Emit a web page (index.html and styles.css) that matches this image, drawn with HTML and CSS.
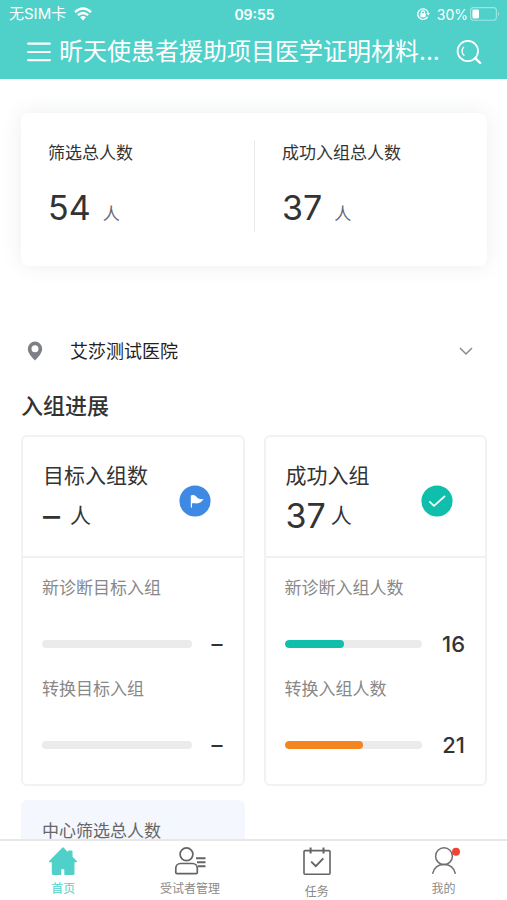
FILE: index.html
```html
<!DOCTYPE html>
<html lang="zh-CN">
<head>
<meta charset="utf-8">
<meta name="viewport" content="width=device-width, initial-scale=1">
<title>首页</title>
<link rel="stylesheet" href="styles.css">
</head>
<body>
<header class="top">
  <div class="status">
    <div class="status-side">
      <span class="carrier">无SIM卡</span>
      <svg width="18" height="14" viewBox="0 0 18 14" fill="none" stroke="#fff" stroke-width="2.4"><path d="M1 5.2Q9-2 17 5.2M3.9 8.2Q9 3.8 14.1 8.2"/><path d="M6 10.2Q9 7.8 12 10.2L9 13.4Z" fill="#fff" stroke="none"/></svg>
    </div>
    <strong class="clock">09:55</strong>
    <div class="status-side status-right">
      <svg width="14" height="14" viewBox="0 0 14 14" fill="none" stroke="#fff" stroke-width="1.3"><path d="M11.6 9.8A5.3 5.3 0 1 1 12.3 6.6"/><path d="M10.4 6.1h3.6l-1.8 2.5z" fill="#fff" stroke="none"/><rect x="4.3" y="6.2" width="5.4" height="4" rx=".6" fill="#fff" stroke="none"/><path d="M5.4 6.5V5.4a1.6 1.6 0 0 1 3.2 0v1.1"/></svg>
      <span class="percent">30%</span>
      <svg width="30" height="14" viewBox="0 0 30 14"><rect x=".6" y=".6" width="25.8" height="12.6" rx="3" fill="none" stroke="#fff" stroke-opacity=".45" stroke-width="1.1"/><rect x="2.4" y="2.4" width="6.6" height="9" rx="1.4" fill="#fff"/><path d="M28 4.6q2 2.3 0 4.6z" fill="#fff" fill-opacity=".5"/></svg>
    </div>
  </div>
  <div class="bar">
    <button class="icon-button" type="button" aria-label="菜单">
      <svg width="24" height="20" viewBox="0 0 24 20" stroke="#fff" stroke-width="2.2" stroke-linecap="round"><path d="M1.2 1.6h21.6M1.2 10h21.6M1.2 18.2h21.6"/></svg>
    </button>
    <h1 class="title">昕天使患者援助项目医学证明材料...</h1>
    <button class="icon-button" type="button" aria-label="搜索">
      <svg width="26" height="26" viewBox="0 0 26 26" fill="none" stroke="#fff" stroke-width="1.8" stroke-linecap="round"><circle cx="11.8" cy="12" r="10.2"/><path d="M7.6 8.2a5.6 5.6 0 0 0 .4 8.1" stroke-width="1.3"/><path d="M19.4 19.4l4.8 4.6" stroke-width="2.4"/></svg>
    </button>
  </div>
</header>

<main class="content">
  <section class="summary">
    <div class="stat">
      <div class="stat-label">筛选总人数</div>
      <div class="stat-value"><span class="number">54</span><span class="unit">人</span></div>
    </div>
    <div class="stat">
      <div class="stat-label">成功入组总人数</div>
      <div class="stat-value"><span class="number">37</span><span class="unit">人</span></div>
    </div>
  </section>

  <div class="hospital">
    <svg width="16" height="20" viewBox="0 0 16 20"><path fill="#7d8186" fill-rule="evenodd" d="M8 .6a7.2 7.2 0 0 0-7.2 7.2C.8 12.2 5 16.6 8 19.4c3-2.8 7.2-7.2 7.2-11.6A7.2 7.2 0 0 0 8 .6zm0 3.6a3.5 3.5 0 1 1 0 7 3.5 3.5 0 0 1 0-7z"/></svg>
    <select class="hospital-select" aria-label="医院"><option>艾莎测试医院</option></select>
    <svg width="14" height="10" viewBox="0 0 14 10" fill="none" stroke="#8a8a8a" stroke-width="1.5"><path d="M1 2l6 6 6-6"/></svg>
  </div>

  <h2 class="heading">入组进展</h2>

  <div class="cards">
    <section class="card">
      <div class="card-top">
        <div class="card-text">
          <div class="card-title">目标入组数</div>
          <div class="card-value"><span class="number">–</span><span class="person">人</span></div>
        </div>
        <svg class="badge" width="32" height="32" viewBox="0 0 32 32"><circle cx="16" cy="16" r="15.6" fill="#3d89e3"/><path d="M12.4 10.4V22.5" stroke="#fff" stroke-width="1.2"/><path d="M12.5 10.4c2.5-1 4.2.2 5.6 2.2 1.8 1.7 3.7 1.9 6.7 1.5-2 2.9-4.4 4.4-7 4.3-2-.1-3.2-.5-5.3.2z" fill="#fff"/></svg>
      </div>
      <div class="card-body">
        <div class="row-label">新诊断目标入组</div>
        <div class="row"><div class="track"></div><b class="count">–</b></div>
        <div class="row-label">转换目标入组</div>
        <div class="row"><div class="track"></div><b class="count">–</b></div>
      </div>
    </section>
    <section class="card">
      <div class="card-top">
        <div class="card-text">
          <div class="card-title">成功入组</div>
          <div class="card-value"><span class="number">37</span><span class="person">人</span></div>
        </div>
        <svg class="badge" width="32" height="32" viewBox="0 0 32 32"><circle cx="16" cy="16" r="15.6" fill="#0fbfab"/><path d="M8.3 16.3l4.7 4.5L24 11" fill="none" stroke="#fff" stroke-width="1.7"/></svg>
      </div>
      <div class="card-body">
        <div class="row-label">新诊断入组人数</div>
        <div class="row"><div class="track"><div class="fill teal" style="width:43%"></div></div><b class="count">16</b></div>
        <div class="row-label">转换入组人数</div>
        <div class="row"><div class="track"><div class="fill orange" style="width:57%"></div></div><b class="count">21</b></div>
      </div>
    </section>
    <section class="panel">中心筛选总人数</section>
  </div>
</main>

<nav class="tabs">
  <a class="tab active" href="#home">
    <svg width="30" height="28" viewBox="0 0 30 28"><path fill="#4fd1ca" stroke="#4fd1ca" stroke-width="1.4" stroke-linejoin="round" d="M15 1L1.7 14.5H4.5V26.5a.8.8 0 0 0 .8.8H12.5V21.5h4.500v5.800H25a.8.8 0 0 0 .8-.8V14.500h2.500L23.800 10V4.200h-3.300v2.500z"/></svg>
    <span>首页</span>
  </a>
  <a class="tab" href="#subjects">
    <svg width="32" height="28" viewBox="0 0 32 28" fill="none" stroke="#646464" stroke-width="1.7"><circle cx="12.5" cy="7.3" r="6.4"/><path d="M6.5 16.5h12a4.800 4.800 0 0 1 4.800 4.800v4.200a1.200 1.200 0 0 1-1.200 1.200H3a1.200 1.200 0 0 1-1.200-1.200v-4.200a4.800 4.800 0 0 1 4.700-4.800z"/><path d="M22 11.200h9.500M23 15.300h8.500M24 19.200h7.500" stroke-width="2"/></svg>
    <span>受试者管理</span>
  </a>
  <a class="tab tab-tasks" href="#tasks">
    <svg width="28" height="28" viewBox="0 0 28 28" fill="none" stroke="#646464" stroke-width="1.6"><rect x="1" y="3.6" width="26" height="23.6" rx="1"/><path d="M7.6.4v6M20.5.4v6" stroke-width="2"/><path d="M8.2 14.6l4.6 4.6 7.5-7.8" stroke-width="1.9"/></svg>
    <span>任务</span>
  </a>
  <a class="tab" href="#me">
    <svg width="32" height="28" viewBox="0 0 32 28" fill="none" stroke="#707070" stroke-width="1.5"><circle cx="16" cy="9.2" r="8.4"/><path d="M4.5 26.8C6 20.5 10.5 17.500 16 17.500s10 3 11.500 9.300"/><circle cx="28" cy="4.8" r="4" fill="#ee4438" stroke="none"/></svg>
    <span>我的</span>
  </a>
</nav>
</body>
</html>
```
FILE: styles.css
```css
* {
  box-sizing: border-box;
}

body {
  margin: 0;
  height: 100vh;
  display: flex;
  flex-direction: column;
  font-family: Inter, "Noto Sans CJK SC", sans-serif;
  color: #333;
  background: #fff;
}

svg {
  display: block;
  flex: none;
}

.top {
  flex: none;
  color: #fff;
  background: #4fd1ca;
}

.status {
  display: flex;
  align-items: center;
  height: 28px;
  padding: 0 7px 0 9px;
  font-size: 14px;
}

.status-side {
  flex: 1;
  display: flex;
  align-items: center;
  gap: 8px;
}

.status-right {
  justify-content: flex-end;
  gap: 2px;
}

.carrier {
  font-size: 15px;
  line-height: 20px;
}

.percent {
  margin-left: 5px;
}

.clock {
  font-weight: 600;
}

.bar {
  display: flex;
  align-items: center;
  height: 51px;
  padding: 0 25px 3px 27px;
}

.icon-button {
  flex: none;
  padding: 0;
  border: 0;
  background: none;
}

.title {
  flex: 1;
  min-width: 0;
  margin: 0 8px;
  overflow: hidden;
  white-space: nowrap;
  font-size: 24px;
  font-weight: 400;
  line-height: 32px;
}

.content {
  flex: 1;
  min-height: 0;
  overflow: hidden;
  padding: 34px 20px 0 21px;
}

.summary {
  display: grid;
  grid-template-columns: 1fr 1fr;
  padding: 27px 0 34px;
  border-radius: 8px;
  box-shadow: 0 0 20px rgba(60, 80, 80, 0.1);
}

.stat {
  padding: 0 27px;
  height: 92px;
}

.stat + .stat {
  border-left: 1px solid #eaeaea;
}

.stat-label {
  font-size: 17px;
  line-height: 26px;
}

.stat-value {
  display: flex;
  align-items: baseline;
  gap: 12px;
  margin-top: 20px;
  line-height: 44px;
}

.number {
  min-width: 22px;
  font-size: 34px;
}

.unit {
  font-size: 17px;
  color: #667;
}

.hospital {
  display: flex;
  align-items: center;
  height: 32px;
  margin-top: 69px;
  padding: 0 14px 0 6px;
}

.hospital-select {
  flex: 1;
  appearance: none;
  margin: 0 10px 0 27px;
  padding: 0;
  border: 0;
  background: none;
  color: #222;
  font: inherit;
  font-size: 18px;
}

.heading {
  margin: 23px 0 13px;
  font-size: 22px;
  font-weight: 500;
  line-height: 32px;
}

.cards {
  display: grid;
  grid-template-columns: 1fr 1fr;
  gap: 14px 19px;
}

.card {
  border: 2px solid #f2f2f2;
  border-radius: 6px;
}

.card-top {
  display: flex;
  align-items: center;
  justify-content: space-between;
  height: 121px;
  padding: 0 32px 0 20px;
  border-bottom: 2px solid #f0f0f0;
}

.card-text {
  margin-top: 8px;
}

.badge {
  margin-top: 8px;
}

.card-title {
  font-size: 21px;
  line-height: 30px;
}

.card-value {
  display: flex;
  align-items: center;
  gap: 5px;
  line-height: 50px;
}

.person {
  font-size: 21px;
}

.card-body {
  padding: 17px 20px 24px 19px;
}

.row-label {
  font-size: 17px;
  line-height: 26px;
  color: #888;
}

.row {
  display: flex;
  align-items: center;
  gap: 20px;
  height: 31px;
  margin: 27px 0 17px;
}

.row:last-child {
  margin-bottom: 0;
}

.track {
  flex: 1;
  height: 8px;
  overflow: hidden;
  border-radius: 4px;
  background: #ebebeb;
}

.fill {
  height: 100%;
  border-radius: 4px;
}

.teal {
  background: #0fbfab;
}

.orange {
  background: #f5861f;
}

.count {
  font-size: 22px;
  font-weight: 500;
}

.panel {
  height: 120px;
  padding: 18px 21px;
  border-radius: 6px;
  background: #f4f7fe;
  color: #666;
  font-size: 17px;
  line-height: 26px;
}

.tabs {
  flex: none;
  display: grid;
  grid-template-columns: repeat(4, 1fr);
  height: 61px;
  border-top: 2px solid #e8e8e8;
  background: #fff;
}

.tab {
  display: flex;
  flex-direction: column;
  align-items: center;
  gap: 5px;
  padding-top: 6px;
  color: #8a8a8a;
  font-size: 12px;
  line-height: 18px;
  text-decoration: none;
}

.tab-tasks {
  gap: 8px;
}

.active {
  color: #4fd1ca;
}
```
